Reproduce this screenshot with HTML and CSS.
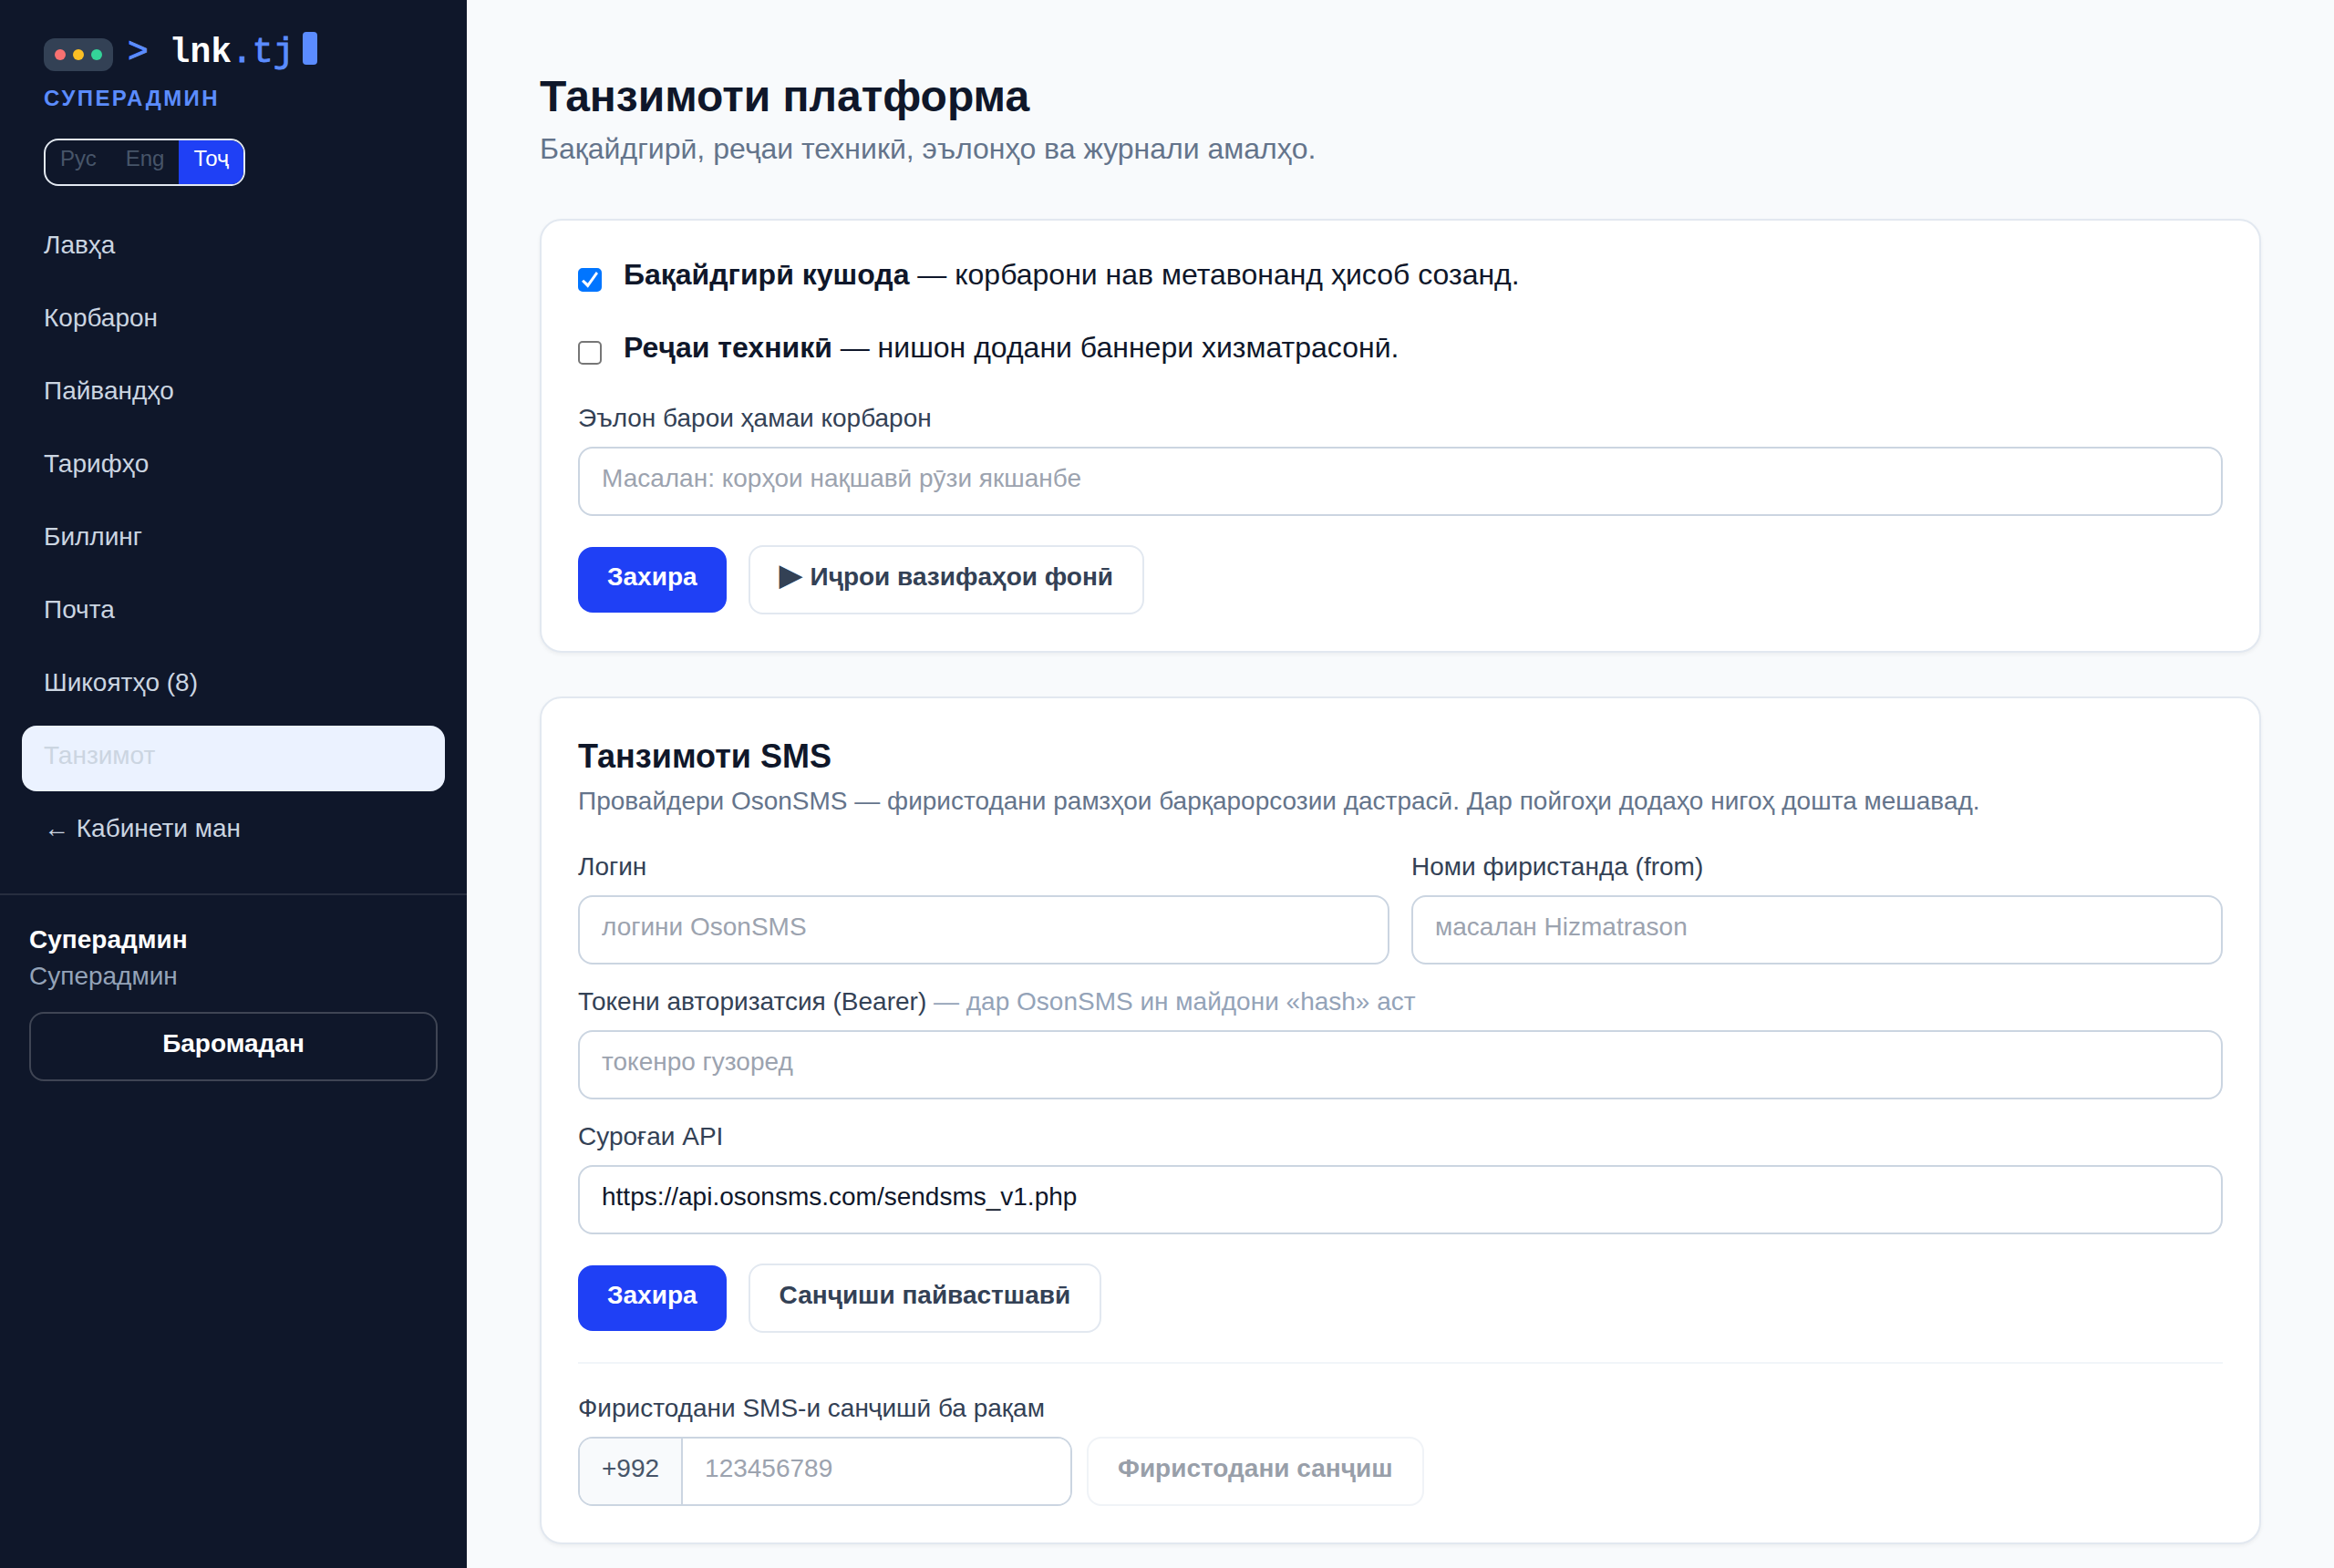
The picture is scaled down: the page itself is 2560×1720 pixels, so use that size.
FILE: index.html
```html
<!DOCTYPE html>
<html lang="tg">
<head>
    <meta charset="UTF-8">
    <meta name="viewport" content="width=device-width, initial-scale=1.0">
    <title>lnk.tj — Танзимоти платформа</title>

    <link rel="stylesheet" href="styles.css">
</head>
<body>
    <div class="layout">
        <aside class="sidebar">
            <div class="sidebar-head">
                <a href="/" class="logo">
                    <span class="logo-window">
                        <i class="dot red"></i>
                        <i class="dot yellow"></i>
                        <i class="dot green"></i>
                    </span>
                    <span class="logo-text"><span class="accent">&gt;</span> lnk<span class="accent">.tj</span><i class="cursor"></i></span>
                </a>
                <div class="role">СУПЕРАДМИН</div>
                <div class="lang">
                    <button type="button">Рус</button>
                    <button type="button">Eng</button>
                    <button type="button" class="active">Тоҷ</button>
                </div>
            </div>

            <nav>
                <a href="/admin">Лавҳа</a>
                <a href="/admin/users">Корбарон</a>
                <a href="/admin/links">Пайвандҳо</a>
                <a href="/admin/plans">Тарифҳо</a>
                <a href="/admin/billing">Биллинг</a>
                <a href="/admin/mail">Почта</a>
                <a href="/admin/reports">Шикоятҳо (8)</a>
                <a href="/admin/settings" class="active">Танзимот</a>
                <a href="/dashboard">← Кабинети ман</a>
            </nav>

            <div class="account">
                <div class="account-name">Суперадмин</div>
                <div class="account-role">Суперадмин</div>
                <button type="button" class="btn btn-dark">Баромадан</button>
            </div>
        </aside>

        <main>
            <h1>Танзимоти платформа</h1>
            <p class="lead">Бақайдгирӣ, реҷаи техникӣ, эълонҳо ва журнали амалҳо.</p>

            <form class="card">
                <label class="check">
                    <input type="checkbox" checked>
                    <span><b>Бақайдгирӣ кушода</b> — корбарони нав метавонанд ҳисоб созанд.</span>
                </label>
                <label class="check">
                    <input type="checkbox">
                    <span><b>Реҷаи техникӣ</b> — нишон додани баннери хизматрасонӣ.</span>
                </label>
                <div class="field">
                    <label for="notice">Эълон барои ҳамаи корбарон</label>
                    <input type="text" id="notice" placeholder="Масалан: корҳои нақшавӣ рӯзи якшанбе">
                </div>
                <div class="actions">
                    <button type="button" class="btn btn-primary">Захира</button>
                    <button type="button" class="btn btn-outline"><span class="play">▶</span> Иҷрои вазифаҳои фонӣ</button>
                </div>
            </form>

            <form class="card">
                <h2>Танзимоти SMS</h2>
                <p class="hint">Провайдери OsonSMS — фиристодани рамзҳои барқарорсозии дастрасӣ. Дар пойгоҳи додаҳо нигоҳ дошта мешавад.</p>
                <div class="fields">
                    <div class="field">
                        <label for="login">Логин</label>
                        <input type="text" id="login" placeholder="логини OsonSMS">
                    </div>
                    <div class="field">
                        <label for="sender">Номи фиристанда (from)</label>
                        <input type="text" id="sender" placeholder="масалан Hizmatrason">
                    </div>
                    <div class="field wide">
                        <label for="token">Токени авторизатсия (Bearer) <span class="muted">— дар OsonSMS ин майдони «hash» аст</span></label>
                        <input type="text" id="token" placeholder="токенро гузоред">
                    </div>
                    <div class="field wide">
                        <label for="api">Суроғаи API</label>
                        <input type="text" id="api" value="https://api.osonsms.com/sendsms_v1.php">
                    </div>
                </div>
                <div class="actions">
                    <button type="button" class="btn btn-primary">Захира</button>
                    <button type="button" class="btn btn-outline">Санҷиши пайвастшавӣ</button>
                </div>
                <hr>
                <div class="field">
                    <label for="phone">Фиристодани SMS-и санҷишӣ ба рақам</label>
                    <div class="phone-row">
                        <div class="phone">
                            <span class="prefix">+992</span>
                            <input type="tel" id="phone" placeholder="123456789">
                        </div>
                        <button type="button" class="btn btn-outline" disabled>Фиристодани санҷиш</button>
                    </div>
                </div>
            </form>
        </main>
    </div>
</body>
</html>
```

FILE: styles.css
```css
* {
    box-sizing: border-box;
}

body {
    font-family: "Liberation Sans", Arial, "DejaVu Sans", sans-serif;
    font-size: 28px;
    line-height: 40px;
    color: #0f172a;
    background-color: #f8fafc;
    margin: 0;
}

h1, h2, p {
    margin: 0;
}

a {
    text-decoration: none;
}

button, input {
    font: inherit;
    color: inherit;
}

.layout {
    display: flex;
    min-height: 100vh;
}

/* Sidebar */
.sidebar {
    width: 512px;
    flex-shrink: 0;
    background-color: #0f172a;
    color: #ffffff;
}

.sidebar-head {
    padding: 32px 48px;
}

.logo {
    display: flex;
    align-items: center;
    gap: 16px;
    color: #ffffff;
}

.logo-window {
    display: flex;
    gap: 8px;
    padding: 12px;
    border-radius: 12px;
    background-color: #334155;
}

.dot {
    width: 12px;
    height: 12px;
    border-radius: 50%;
}

.red {
    background-color: #f87171;
}

.yellow {
    background-color: #fbbf24;
}

.green {
    background-color: #34d399;
}

.logo-text {
    font-family: "Liberation Mono", monospace;
    font-size: 38px;
    font-weight: bold;
    line-height: 52px;
    padding-bottom: 4px;
    white-space: nowrap;
}

.accent {
    font-weight: normal;
    -webkit-text-stroke: 1px #5b8cff;
    color: #5b8cff;
}

.cursor {
    display: inline-block;
    width: 16px;
    height: 36px;
    margin-left: 10px;
    border-radius: 4px;
    background-color: #5b8cff;
    vertical-align: -3px;
}

.role {
    font-size: 24px;
    font-weight: bold;
    line-height: 32px;
    letter-spacing: 0.1em;
    color: #5b8cff;
    margin-top: 4px;
}

.lang {
    display: inline-flex;
    vertical-align: top;
    margin-top: 28px;
    border: 2px solid #e2e8f0;
    border-radius: 16px;
    overflow: hidden;
}

.lang button {
    font-size: 24px;
    line-height: 32px;
    padding: 4px 16px 12px;
    border: none;
    background: none;
    color: #475569;
}

.lang button.active {
    background-color: #1f40f5;
    color: #ffffff;
}

nav {
    display: flex;
    flex-direction: column;
    gap: 8px;
    padding: 0 24px 32px;
}

nav a {
    padding: 13px 24px 19px;
    border-radius: 16px;
    color: #cbd5e1;
}

nav a.active {
    background-color: #ebf2ff;
}

.account {
    padding: 29px 32px;
    border-top: 2px solid rgba(255, 255, 255, 0.1);
}

.account-name {
    font-weight: bold;
}

.account-role {
    color: #94a3b8;
}

/* Buttons */
.btn {
    padding: 13px 32px 19px;
    border: none;
    border-radius: 16px;
    background: none;
    font-weight: bold;
    white-space: nowrap;
}

.btn-primary {
    background-color: #1f40f5;
    color: #ffffff;
}

.btn-outline {
    border: 2px solid #e2e8f0;
    background-color: #ffffff;
    color: #334155;
}

.btn-dark {
    width: 100%;
    margin-top: 19px;
    border: 2px solid rgba(255, 255, 255, 0.2);
    color: #ffffff;
}

.btn:disabled {
    opacity: 0.5;
}

.play {
    font-size: 34px;
    line-height: 34px;
}

/* Content */
main {
    flex: 1;
    min-width: 0;
    padding: 80px 80px 24px;
}

h1 {
    font-size: 48px;
    line-height: 52px;
    margin-bottom: 12px;
}

.lead {
    font-size: 32px;
    line-height: 38px;
    color: #64748b;
    padding-bottom: 10px;
}

.card {
    margin-top: 48px;
    padding: 40px;
    border: 2px solid #e2e8f0;
    border-radius: 24px;
    background-color: #ffffff;
    box-shadow: 0 2px 4px rgba(0, 0, 0, 0.05);
}

.check {
    display: flex;
    align-items: flex-start;
    gap: 24px;
    margin-bottom: 32px;
    font-size: 32px;
    line-height: 38px;
    padding-bottom: 10px;
}

.check input {
    appearance: none;
    display: grid;
    place-items: center;
    width: 26px;
    height: 26px;
    margin: 12px 0 0;
    border: 2px solid #767676;
    border-radius: 5px;
    background-color: #ffffff;
}

.check input:checked {
    border-color: #0075ff;
    background-color: #0075ff;
}

.check input:checked::after {
    content: "";
    width: 18px;
    height: 18px;
    background-color: #ffffff;
    clip-path: polygon(0 60%, 12% 48%, 37% 71%, 88% 0, 100% 11%, 38% 98%);
}

h2 {
    font-size: 36px;
    line-height: 48px;
    margin-bottom: 8px;
}

.hint {
    line-height: 34px;
    color: #64748b;
    margin-bottom: 38px;
}

.fields {
    display: grid;
    grid-template-columns: 1fr 1fr;
    gap: 24px;
}

.wide {
    grid-column: 1 / -1;
}

.field label {
    display: block;
    line-height: 34px;
    color: #334155;
    margin-bottom: 14px;
}

.muted {
    color: #94a3b8;
}

.field input {
    display: block;
    width: 100%;
    height: 76px;
    padding: 13px 24px 19px;
    border: 2px solid #cbd5e1;
    border-radius: 16px;
    background-color: #ffffff;
}

.field input::placeholder {
    color: #9ca3af;
}

.actions {
    display: flex;
    align-items: center;
    gap: 24px;
    margin-top: 32px;
}

hr {
    margin: 32px 0;
    border: none;
    border-top: 2px solid #f1f5f9;
}

.phone-row {
    display: flex;
    gap: 16px;
}

.phone {
    display: flex;
    width: 542px;
    border: 2px solid #cbd5e1;
    border-radius: 16px;
    overflow: hidden;
}

.prefix {
    padding: 13px 24px 19px;
    border-right: 2px solid #cbd5e1;
    background-color: #f8fafc;
    color: #475569;
}

.phone input {
    flex: 1;
    min-width: 0;
    height: 72px;
    border: none;
    border-radius: 0;
}
```
